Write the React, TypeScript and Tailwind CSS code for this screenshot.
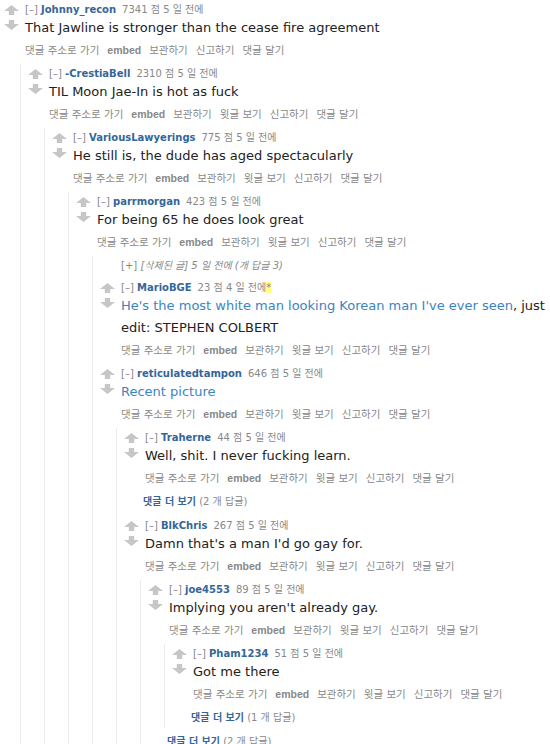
import React from "react"

type Node =
  | {
      kind: "comment"
      author: string
      score: number
      age: string
      body: React.ReactNode[]
      parent?: boolean
      edited?: boolean
      children?: Node[]
    }
  | { kind: "deleted" }
  | { kind: "more"; count: number }

const link = "text-[#3b84c4]"

const thread: Node = {
  kind: "comment",
  author: "Johnny_recon",
  score: 7341,
  age: "5 일 전에",
  body: ["That Jawline is stronger than the cease fire agreement"],
  children: [
    {
      kind: "comment",
      author: "-CrestiaBell",
      score: 2310,
      age: "5 일 전에",
      parent: true,
      body: ["TIL Moon Jae-In is hot as fuck"],
      children: [
        {
          kind: "comment",
          author: "VariousLawyerings",
          score: 775,
          age: "5 일 전에",
          parent: true,
          body: ["He still is, the dude has aged spectacularly"],
          children: [
            {
              kind: "comment",
              author: "parrmorgan",
              score: 423,
              age: "5 일 전에",
              parent: true,
              body: ["For being 65 he does look great"],
              children: [
                { kind: "deleted" },
                {
                  kind: "comment",
                  author: "MarioBGE",
                  score: 23,
                  age: "4 일 전에",
                  parent: true,
                  edited: true,
                  body: [
                    <>
                      <span className={link}>He's the most white man looking Korean man I've ever seen</span>, just
                    </>,
                    "edit: STEPHEN COLBERT",
                  ],
                },
                {
                  kind: "comment",
                  author: "reticulatedtampon",
                  score: 646,
                  age: "5 일 전에",
                  parent: true,
                  body: [<span className={link}>Recent picture</span>],
                  children: [
                    {
                      kind: "comment",
                      author: "Traherne",
                      score: 44,
                      age: "5 일 전에",
                      parent: true,
                      body: ["Well, shit. I never fucking learn."],
                    },
                    { kind: "more", count: 2 },
                    {
                      kind: "comment",
                      author: "BlkChris",
                      score: 267,
                      age: "5 일 전에",
                      parent: true,
                      body: ["Damn that's a man I'd go gay for."],
                      children: [
                        {
                          kind: "comment",
                          author: "joe4553",
                          score: 89,
                          age: "5 일 전에",
                          parent: true,
                          body: ["Implying you aren't already gay."],
                          children: [
                            {
                              kind: "comment",
                              author: "Pham1234",
                              score: 51,
                              age: "5 일 전에",
                              parent: true,
                              body: ["Got me there"],
                            },
                            { kind: "more", count: 1 },
                          ],
                        },
                        { kind: "more", count: 2 },
                      ],
                    },
                  ],
                },
              ],
            },
          ],
        },
      ],
    },
  ],
}

function Arrow({ down }: { down?: boolean }) {
  return (
    <svg width="15" height="10" viewBox="0 0 15 10" className={down ? "rotate-180" : ""}>
      <path d="M7.5 0 L15 6 L10.2 6 L10.2 10 L4.8 10 L4.8 6 L0 6 Z" fill="#c6c6c6" />
    </svg>
  )
}

function Buttons({ parent }: { parent?: boolean }) {
  const items = ["댓글 주소로 가기", "embed", "보관하기", ...(parent ? ["윗글 보기"] : []), "신고하기", "댓글 달기"]
  return (
    <div className="flex h-[20px] items-center gap-[8px] pt-[2px] text-[10.5px] text-[#888]">
      {items.map((t) => (
        <span key={t} className={t === "embed" ? "font-bold text-[10.5px] font-['Liberation_Sans']" : ""}>
          {t}
        </span>
      ))}
    </div>
  )
}

function Comment({ c }: { c: Extract<Node, { kind: "comment" }> }) {
  return (
    <div>
      <div className="mb-[4px] flex">
        <div className="ml-[4px] mr-[6px] flex w-[15px] flex-col gap-[5px] pt-[5px]">
          <Arrow />
          <Arrow down />
        </div>
        <div className="min-w-0 flex-1">
          <div className="h-[16px] whitespace-nowrap text-[10px] leading-[19px] text-[#888]">
            [–]{" "}
            <span className="font-bold text-[#336699] font-['DejaVu_Sans']">{c.author}</span>
            <span className="ml-[6px]">
              {c.score} 점 {c.age}
            </span>
            {c.edited && <span className="bg-[#ffff80] text-[#888]">*</span>}
          </div>
          <div className="flex flex-col gap-[2px] py-[2px] text-[13px] leading-[20px] text-[#222] font-['DejaVu_Sans','Noto_Sans_CJK_KR',sans-serif]">
            {c.body.map((p, i) => (
              <p key={i} className="whitespace-nowrap">
                {p}
              </p>
            ))}
          </div>
          <Buttons parent={c.parent} />
        </div>
      </div>
      {c.children && (
        <div className="ml-[20px] border-l border-[#ebebeb] pl-[3px]">
          {c.children.map((n, i) => (
            <Item key={i} n={n} />
          ))}
        </div>
      )}
    </div>
  )
}

function Item({ n }: { n: Node }) {
  if (n.kind === "comment") return <Comment c={n} />
  if (n.kind === "deleted")
    return (
      <div className="mb-[4px] h-[18px] whitespace-nowrap pl-[25px] text-[10px] leading-[20px] text-[#888]">
        [+] <span className="italic">[삭제된 글] 5 일 전에 (개 답글 3)</span>
      </div>
    )
  return (
    <div className="mb-[4px] h-[20px] whitespace-nowrap pl-[23px] text-[10px] leading-[20px] text-[#888]">
      <span className="font-bold text-[#336699]">댓글 더 보기</span> ({n.count} 개 답글)
    </div>
  )
}

export default function App() {
  return (
    <div className="h-[744px] w-[550px] overflow-hidden bg-white font-['DejaVu_Sans','Noto_Sans_CJK_KR',sans-serif]">
      <Item n={thread} />
    </div>
  )
}
